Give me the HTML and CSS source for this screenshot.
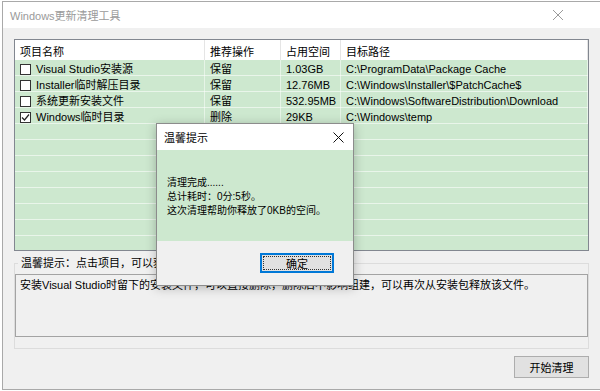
FILE: index.html
```html
<!DOCTYPE html>
<html lang="zh-CN">
<head>
    <meta charset="UTF-8">
    <title>Windows更新清理工具</title>
    <link rel="stylesheet" href="styles.css">
</head>
<body>
    <div class="window">
        <div class="titlebar">
            <span class="title">Windows更新清理工具</span>
            <svg class="close" width="10" height="10" viewBox="0 0 10 10"><path d="M0 0L10 10M10 0L0 10" stroke="#9a9a9a" stroke-width="1"/></svg>
        </div>
        <div class="client">
            <div class="list">
                <div class="row head">
                    <div class="c1">项目名称</div>
                    <div class="c2">推荐操作</div>
                    <div class="c3">占用空间</div>
                    <div class="c4">目标路径</div>
                </div>
                <div class="body">
                    <div class="row">
                        <div class="c1"><span class="check"></span>Visual Studio安装源</div>
                        <div class="c2">保留</div>
                        <div class="c3">1.03GB</div>
                        <div class="c4">C:\ProgramData\Package Cache</div>
                    </div>
                    <div class="row">
                        <div class="c1"><span class="check"></span>Installer临时解压目录</div>
                        <div class="c2">保留</div>
                        <div class="c3">12.76MB</div>
                        <div class="c4">C:\Windows\Installer\$PatchCache$</div>
                    </div>
                    <div class="row">
                        <div class="c1"><span class="check"></span>系统更新安装文件</div>
                        <div class="c2">保留</div>
                        <div class="c3">532.95MB</div>
                        <div class="c4">C:\Windows\SoftwareDistribution\Download</div>
                    </div>
                    <div class="row">
                        <div class="c1"><span class="check on"><svg width="9" height="9" viewBox="0 0 9 9"><path d="M1 4.5L3.5 7L8 1.5" fill="none" stroke="#222" stroke-width="1.2"/></svg></span>Windows临时目录</div>
                        <div class="c2">删除</div>
                        <div class="c3">29KB</div>
                        <div class="c4">C:\Windows\temp</div>
                    </div>
                </div>
            </div>

            <fieldset class="tips">
                <legend>温馨提示：点击项目，可以获取该项目的详细说明。</legend>
                <div class="desc">安装Visual Studio时留下的安装文件，可以直接删除，删除后不影响组建，可以再次从安装包释放该文件。</div>
            </fieldset>

            <div class="actions">
                <button class="btn">开始清理</button>
            </div>
        </div>
    </div>

    <div class="dialog">
        <div class="dlg-title">
            <span>温馨提示</span>
            <svg width="11" height="11" viewBox="0 0 11 11"><path d="M0.5 0.5L10.5 10.5M10.5 0.5L0.5 10.5" stroke="#111" stroke-width="1"/></svg>
        </div>
        <div class="dlg-body">
            <p>清理完成......</p>
            <p>总计耗时：0分:5秒。</p>
            <p>这次清理帮助你释放了0KB的空间。</p>
        </div>
        <div class="dlg-foot">
            <button class="btn ok">确定</button>
        </div>
    </div>
</body>
</html>
```

FILE: styles.css
```css
body {
    margin: 0;
    width: 600px;
    height: 391px;
    overflow: hidden;
    background: #fff;
    font-family: "Liberation Sans", "Noto Sans CJK SC", sans-serif;
    font-size: 11px;
    color: #000;
    position: relative;
}
.window {
    margin: 1px 0 0 2px;
    width: 610px;
    height: 387px;
    border: 1px solid #a9a9a9;
    border-right: none;
    background: #f0f0f0;
    display: flex;
    flex-direction: column;
}
.titlebar {
    height: 26px;
    background: #fff;
    display: flex;
    align-items: center;
    padding: 0 0 0 7px;
}
.title {
    color: #9a9a9a;
    flex: 1;
}
.titlebar .close {
    margin-right: 50px;
}
.client {
    padding: 11px 0 0 11px;
    width: 575px;
}
.list {
    height: 210px;
    border: 1px solid #828790;
    background: #fff;
    display: flex;
    flex-direction: column;
    overflow: hidden;
}
.row {
    display: flex;
    height: 16px;
    line-height: 19px;
}
.row > div {
    padding-left: 5px;
    white-space: nowrap;
    overflow: hidden;
    flex-shrink: 0;
    border-right: 1px solid rgba(255, 255, 255, 0.5);
}
.c1 { width: 184px; }
.c2 { width: 70px; }
.c3 { width: 54px; }
.c4 { flex: 1; }
.body .c1 {
    display: flex;
    align-items: flex-start;
}
.head {
    height: 20px;
    line-height: 24px;
    background: #fff;
}
.head > div {
    border-right: 1px solid #e5e5e5;
}
.body {
    flex: 1;
    background: repeating-linear-gradient(#cde8cf 0 15px, #e9f5ea 15px 16px);
}
.check {
    width: 11px;
    height: 11px;
    flex-shrink: 0;
    box-sizing: border-box;
    border: 1px solid #333;
    background: #fff;
    margin: 4px 5px 0 0;
    display: flex;
    align-items: center;
    justify-content: center;
}
.tips {
    margin: 4px 0 0 0;
    padding: 0 0 11px 0;
    border: 1px solid #dcdcdc;
    min-width: 0;
}
.tips legend {
    padding: 0 3px;
    margin-left: 3px;
    line-height: 16px;
    white-space: nowrap;
}
.desc {
    height: 57px;
    margin-top: 3px;
    border: 1px solid #a3a3a3;
    padding: 2px 4px;
    line-height: 16px;
    white-space: nowrap;
    overflow: hidden;
}
.actions {
    display: flex;
    justify-content: flex-end;
    padding-top: 7px;
}
.btn {
    width: 75px;
    height: 22px;
    background: #e1e1e1;
    border: 1px solid #adadad;
    font: inherit;
    font-size: 11px;
    padding: 0;
    color: #000;
}
.dialog {
    position: absolute;
    left: 156px;
    top: 123px;
    width: 196px;
    height: 161px;
    border: 1px solid #8c8c8c;
    background: #f0f0f0;
    box-shadow: 0 2px 10px rgba(0, 0, 0, 0.25);
    display: flex;
    flex-direction: column;
}
.dlg-title {
    height: 26px;
    background: #fff;
    display: flex;
    align-items: center;
    justify-content: space-between;
    padding: 0 9px 0 7px;
}
.dlg-body {
    height: 65px;
    background: #cde8cf;
    padding: 26px 0 0 10px;
    font-size: 10px;
}
.dlg-body p {
    margin: 0;
    line-height: 14px;
    white-space: nowrap;
}
.dlg-foot {
    flex: 1;
    display: flex;
    justify-content: flex-end;
    align-items: flex-start;
    padding: 12px 19px 0 0;
}
.ok {
    width: 74px;
    height: 20px;
    border: 1px solid #0078d7;
    box-shadow: inset 0 0 0 1px #0078d7;
    outline: 1px dotted #333;
    outline-offset: -4px;
}
```
